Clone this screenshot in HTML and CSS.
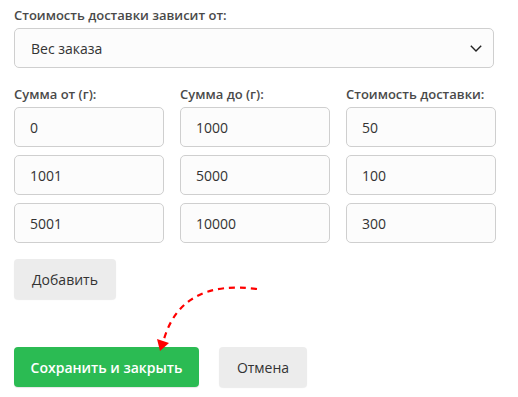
FILE: index.html
```html
<!DOCTYPE html>
<html lang="ru">
<head>
    <meta charset="UTF-8">
    <meta name="viewport" content="width=device-width, initial-scale=1.0">
    <title>Стоимость доставки</title>
    <link rel="stylesheet" href="styles.css">
</head>
<body>
    <div class="container">
        <div class="form-group">
            <label for="dependsOn">Стоимость доставки зависит от:</label>
            <div class="select-wrap">
                <select id="dependsOn" class="select">
                    <option>Вес заказа</option>
                    <option>Сумма заказа</option>
                </select>
                <svg class="chevron" width="12" height="7" viewBox="0 0 12 7">
                    <path d="M0.8 0.8 L6 6 L11.2 0.8" fill="none" stroke="#222" stroke-width="1.4"/>
                </svg>
            </div>
        </div>

        <div class="rates">
            <div class="rates-head">Сумма от (г):</div>
            <div class="rates-head">Сумма до (г):</div>
            <div class="rates-head">Стоимость доставки:</div>

            <input type="text" class="field" value="0">
            <input type="text" class="field" value="1000">
            <input type="text" class="field" value="50">

            <input type="text" class="field" value="1001">
            <input type="text" class="field" value="5000">
            <input type="text" class="field" value="100">

            <input type="text" class="field" value="5001">
            <input type="text" class="field" value="10000">
            <input type="text" class="field" value="300">
        </div>

        <button type="button" class="btn btn-gray add-btn">Добавить</button>

        <div class="actions">
            <button type="submit" class="btn btn-green">Сохранить и закрыть</button>
            <button type="button" class="btn btn-gray">Отмена</button>
        </div>
    </div>

    <!-- hint arrow drawn over the form -->
    <svg class="hint-arrow" width="518" height="397" viewBox="0 0 518 397">
        <path d="M257 289 Q182 279 164 339" fill="none" stroke="#f00" stroke-width="2.2" stroke-dasharray="6 5"/>
        <polygon points="157,339 169,343 160,351" fill="#f00"/>
    </svg>
</body>
</html>
```

FILE: styles.css
```css
* {
    margin: 0;
    padding: 0;
    box-sizing: border-box;
}

body {
    font-family: 'Open Sans', 'Liberation Sans', sans-serif;
    background: #fff;
    color: #333;
    position: relative;
    min-height: 397px;
}

.container {
    padding: 6px 14px 0;
    width: 510px;
}

.form-group {
    margin-bottom: 17px;
}

label,
.rates-head {
    display: block;
    font-size: 13px;
    line-height: 18px;
    font-weight: 600;
    color: #4a4a4a;
    margin-bottom: 4px;
}

.select-wrap {
    position: relative;
    width: 480px;
}

.select {
    appearance: none;
    -webkit-appearance: none;
    width: 100%;
    height: 40px;
    padding: 0 16px;
    border: 1px solid #cfcfcf;
    border-radius: 5px;
    background: #fcfcfc;
    font-family: inherit;
    font-size: 14px;
    color: #333;
    outline: none;
}

.chevron {
    position: absolute;
    right: 12px;
    top: 17px;
    pointer-events: none;
}

.rates {
    display: grid;
    grid-template-columns: repeat(3, 150px);
    column-gap: 16px;
    row-gap: 8px;
}

.rates-head {
    margin-bottom: -4px;
}

.field {
    width: 150px;
    height: 40px;
    padding: 0 15px;
    border: 1px solid #cfcfcf;
    border-radius: 5px;
    background: #fcfcfc;
    font-family: inherit;
    font-size: 14px;
    color: #333;
    outline: none;
}

.btn {
    height: 40px;
    border: none;
    border-radius: 4px;
    font-family: inherit;
    font-size: 14px;
    cursor: pointer;
}

.btn-gray {
    background: #ececec;
    color: #333;
    box-shadow: 0 1px 1px rgba(0, 0, 0, 0.08);
}

.add-btn {
    width: 102px;
    margin-top: 16px;
}

.actions {
    display: flex;
    gap: 20px;
    margin-top: 48px;
}

.btn-green {
    width: 185px;
    background: #2bbb53;
    color: #fff;
    font-weight: 600;
    box-shadow: 0 1px 1px rgba(0, 0, 0, 0.1);
}

.actions .btn-gray {
    width: 88px;
}

.hint-arrow {
    position: absolute;
    left: 0;
    top: 0;
    pointer-events: none;
}
```
